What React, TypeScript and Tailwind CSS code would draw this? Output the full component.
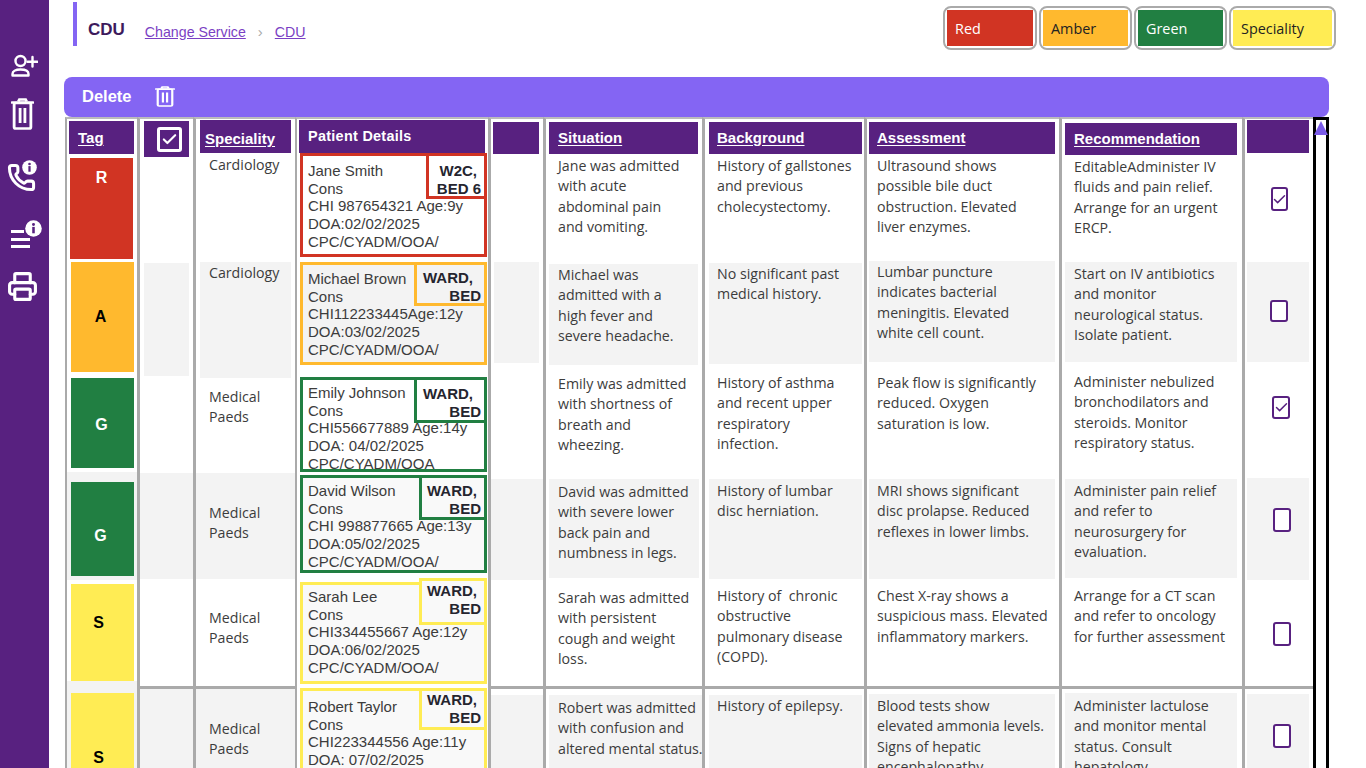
import React from "react";
import { Phone, Printer, Check } from "lucide-react";

const Lines = ({ lines }: { lines: string[] }) => (
  <>
    {lines.map((l, i) => (
      <div key={i} className="whitespace-pre">{l}</div>
    ))}
  </>
);

const Cell = ({ className, lines }: { className: string; lines?: string[] }) => (
  <div className={`shrink-0 overflow-hidden text-[14.2px] leading-[20.4px] text-[#3c3c3c] font-['Open_Sans',sans-serif] ${className}`}>
    {lines && <Lines lines={lines} />}
  </div>
);

const Head = ({ className, label, plain, children }: { className: string; label?: string; plain?: boolean; children?: React.ReactNode }) => (
  <div className={`shrink-0 flex items-center bg-[#582180] text-white font-bold font-['Liberation_Sans',sans-serif] ${className}`}>
    {label && <span className={plain ? "" : "underline underline-offset-2"}>{label}</span>}
    {children}
  </div>
);

const Info = ({ className }: { className: string }) => (
  <svg viewBox="0 0 16 16" className={`absolute ${className}`}>
    <circle cx="8" cy="8" r="7.8" fill="#ffffff" />
    <circle cx="8" cy="4.2" r="1.4" fill="#582180" />
    <rect x="6.8" y="6.5" width="2.4" height="6" fill="#582180" />
  </svg>
);

const Trash = ({ className, sw }: { className: string; sw: number }) => (
  <svg viewBox="0 0 22 32" preserveAspectRatio="none" fill="none" stroke="#ffffff" strokeWidth={sw} className={className}>
    <path d="M1 4.5h20" strokeLinecap="round" />
    <path d="M7 3.5 8 1.5h6l1 2" />
    <rect x="3" y="5" width="16" height="25.5" rx="1.5" />
    <path d="M8.7 10v15M13.3 10v15" />
  </svg>
);

const UserAdd = ({ className }: { className: string }) => (
  <svg viewBox="0 0 27 23" fill="none" stroke="#ffffff" strokeWidth="2.4" className={className}>
    <circle cx="9.5" cy="7" r="5" />
    <path d="M1.500 21.500v-1.500c0-2.800 3-4.500 8-4.500s8 1.700 8 4.500v1.500z" strokeLinejoin="round" />
    <path d="M21.500 3v9.500M16.500 7.800h10" strokeLinecap="round" />
  </svg>
);

const Box = ({ className, checked }: { className: string; checked?: boolean }) => (
  <div className={`flex items-center justify-center rounded-[3px] border-[2.5px] border-[#582180] bg-white ${className}`}>
    {checked && <Check size={15} strokeWidth={2.3} className="shrink-0 text-[#582180]" />}
  </div>
);

const Card = ({
  border,
  bg,
  cardClass,
  badgeClass,
  firstClass,
  badge,
  lines,
}: {
  border: string;
  bg: string;
  cardClass: string;
  badgeClass: string;
  firstClass: string;
  badge: string[];
  lines: string[];
}) => (
  <div className={`relative shrink-0 ml-[3px] w-[187px] border-[3px] pl-[5px] text-[15px] leading-[17.7px] text-[#3c3c3c] font-['Liberation_Sans',sans-serif] ${border} ${bg} ${cardClass}`}>
    <Lines lines={lines} />
    <div className={`absolute right-[-3px] border-[3px] pr-[3px] text-right font-bold text-[#25252f] ${border} ${bg} ${badgeClass}`}>
      {badge.map((b, i) => (
        <div key={b} className={i === 0 ? firstClass : ""}>{b}</div>
      ))}
    </div>
  </div>
);

const Tag = ({ className, label }: { className: string; label: string }) => (
  <div className={`shrink-0 flex justify-center font-bold text-[16px] font-['Liberation_Sans',sans-serif] ${className}`}>{label}</div>
);

const Legend = ({ label, className }: { label: string; className: string }) => (
  <div className="rounded-lg border-2 border-[#aaaaaa] p-[2px]">
    <div className={`flex h-[36px] items-center pl-[8px] pt-[1px] text-[14.4px] font-['Open_Sans',sans-serif] ${className}`}>{label}</div>
  </div>
);

const Rule = () => <div className="h-[3px] shrink-0 bg-[#aaaaaa]" />;
const COL = "flex h-full shrink-0 flex-col overflow-hidden border-t-2 border-t-[#bbbbbb] border-l-[#aaaaaa] bg-white";

export default function App() {
  return (
    <div className="flex h-[768px] w-[1366px] overflow-hidden bg-white">
      <aside className="relative flex w-[49px] shrink-0 flex-col items-start bg-[#582180] text-white">
        <UserAdd className="ml-[11px] mt-[54px] h-[23px] w-[27px]" />
        <Trash sw={2.7} className="ml-[11px] mt-[21px] h-[32px] w-[23px]" />
        <div className="relative ml-[7px] mt-[30px] h-[32px] w-[32px]">
          <Phone size={29} strokeWidth={2.5} className="mt-[3px]" />
          <Info className="left-[15px] top-[0px] h-[15px] w-[15px]" />
        </div>
        <div className="relative ml-[11px] mt-[28px] h-[32px] w-[32px]">
          <div className="mt-[10px] flex flex-col gap-[4.5px]">
            <div className="h-[3px] w-[13px] bg-white" />
            <div className="h-[3px] w-[19px] bg-white" />
            <div className="h-[3px] w-[19px] bg-white" />
          </div>
          <Info className="left-[14px] top-[0px] h-[17px] w-[17px]" />
        </div>
        <Printer size={31} strokeWidth={2.4} className="ml-[7px] mt-[19px]" />
      </aside>

      <main className="flex h-full min-w-0 flex-1 flex-col">
        <header className="flex h-[77px] shrink-0 items-start">
          <div className="ml-[24px] mt-[2px] h-[44px] w-[4px] bg-[#8465f3]" />
          <div className="ml-[11px] mt-[19px] text-[17px] font-bold leading-[22px] text-[#3d1a5c] font-['Liberation_Sans',sans-serif]">CDU</div>
          <div className="ml-[20px] mt-[23px] flex items-center text-[14.2px] leading-[18px] text-[#7b3fc4] font-['Liberation_Sans',sans-serif]">
            <span className="underline">Change Service</span>
            <span className="mx-[12px] text-[15px] text-[#aaaaaa]">›</span>
            <span className="underline">CDU</span>
          </div>
          <div className="ml-auto mr-[30px] mt-[6px] flex gap-[2px]">
            <div className="w-[94px]"><Legend label="Red" className="bg-[#d13423] text-white" /></div>
            <div className="w-[93px]"><Legend label="Amber" className="bg-[#ffb92e] text-[#222222]" /></div>
            <div className="w-[93px]"><Legend label="Green" className="bg-[#217f42] text-white" /></div>
            <div className="w-[107px]"><Legend label="Speciality" className="bg-[#ffec54] text-[#222222]" /></div>
          </div>
        </header>

        <div className="ml-[15px] flex h-[40px] w-[1265px] shrink-0 items-center rounded-lg bg-[#8465f3] pb-[1px] pl-[18px] text-white">
          <span className="text-[16.5px] font-bold font-['Liberation_Sans',sans-serif]">Delete</span>
          <Trash sw={2.4} className="ml-[23px] h-[21px] w-[20px]" />
        </div>

        <div className="ml-[16px] flex min-h-0 flex-1 overflow-hidden">
          <div className={`${COL} w-[72px] border-l-2`}>
            <Head className="ml-[2px] mt-[2px] h-[33px] w-[65px] pl-[9px] pt-[1px] text-[15px]" label="Tag" />
            <Tag className="ml-[3px] mt-[4px] h-[101px] w-[63px] bg-[#d13423] pt-[8px] text-white" label="R" />
            <Tag className="ml-[4px] mt-[3px] h-[110px] w-[63px] items-center bg-[#ffb92e] pr-[4px] text-black" label="A" />
            <Tag className="ml-[4px] mt-[6px] h-[90px] w-[63px] items-center bg-[#217f42] pt-[4px] pr-[2px] text-white" label="G" />
            <div className="mt-[4px] h-[108px] shrink-0 bg-[#f3f3f3] pl-[4px] pt-[10px]">
              <Tag className="h-[94px] w-[63px] items-center bg-[#217f42] pt-[14px] pr-[4px] text-white" label="G" />
            </div>
            <Tag className="ml-[4px] mt-[4px] h-[97px] w-[63px] items-center bg-[#ffec54] pb-[20px] pr-[8px] text-black" label="S" />
            <div className="flex min-h-0 flex-1 flex-col bg-[#f3f3f3] pl-[4px] pt-[12px]">
              <Tag className="min-h-0 w-[63px] flex-1 bg-[#ffec54] pt-[53px] pr-[8px] text-black" label="S" />
            </div>
          </div>

          <div className={`${COL} w-[56px] border-l-[3px]`}>
            <Head className="ml-[4px] mt-[2px] h-[36px] w-[45px] justify-center pl-[5px]">
              <div className="flex h-[25px] w-[25px] items-center justify-center rounded-[3px] border-[3px] border-white">
                <Check size={17} strokeWidth={3} className="shrink-0 text-white" />
              </div>
            </Head>
            <Cell className="h-[106px]" />
            <Cell className="ml-[4px] h-[113px] w-[45px] bg-[#f3f3f3]" />
            <Cell className="h-[97px]" />
            <Cell className="h-[106px] bg-[#f3f3f3]" />
            <Cell className="h-[107px]" />
            <Rule />
            <div className="flex-1 bg-[#f3f3f3]" />
          </div>

          <div className={`${COL} w-[102px] border-l-[3px]`}>
            <Head className="ml-[4px] mt-[1px] h-[33px] w-[91px] pl-[5px] pt-[5px] text-[15px]" label="Speciality" />
            <Cell className="h-[109px] pl-[13px] pt-[2px]" lines={["Cardiology"]} />
            <Cell className="ml-[4px] h-[116px] w-[91px] bg-[#f3f3f3] pl-[9px] pt-[1px]" lines={["Cardiology"]} />
            <Cell className="h-[95px] pl-[13px] pt-[9px]" lines={["Medical", "Paeds"]} />
            <Cell className="h-[106px] bg-[#f3f3f3] pl-[13px] pt-[30px]" lines={["Medical", "Paeds"]} />
            <Cell className="h-[107px] pl-[13px] pt-[29px]" lines={["Medical", "Paeds"]} />
            <Rule />
            <Cell className="flex-1 bg-[#f3f3f3] pl-[13px] pt-[30px]" lines={["Medical", "Paeds"]} />
          </div>

          <div className={`${COL} w-[193px] border-l-2 border-l-[#aaaaaa]`}>
            <Head className="ml-[2px] mt-[1px] h-[33px] w-[186px] pl-[9px] text-[14.4px] tracking-[0.3px]" label="Patient Details" plain />
            <Card border="border-[#d13423]" bg="bg-white" cardClass="h-[104px] pt-[6px]" badgeClass="top-[-3px] w-[61px] h-[46px] pt-[6px]" firstClass="pr-[4px]" badge={["W2C,", "BED 6"]} lines={["Jane Smith", "Cons", "CHI 987654321 Age:9y", "DOA:02/02/2025", "CPC/CYADM/OOA/"]} />
            <Card border="border-[#ffb92e]" bg="bg-[#f3f3f3]" cardClass="mt-[5px] h-[103px] pt-[5px]" badgeClass="top-[-3px] w-[73px] h-[44px] pt-[4px]" firstClass="pr-[8px]" badge={["WARD,", "BED"]} lines={["Michael Brown", "Cons", "CHI112233445Age:12y", "DOA:03/02/2025", "CPC/CYADM/OOA/"]} />
            <Card border="border-[#217f42]" bg="bg-white" cardClass="mt-[12px] h-[95px] pt-[4px]" badgeClass="top-[-3px] w-[73px] h-[46px] pt-[5px]" firstClass="pr-[8px]" badge={["WARD,", "BED"]} lines={["Emily Johnson", "Cons", "CHI556677889 Age:14y", "DOA: 04/02/2025", "CPC/CYADM/OOA"]} />
            <Card border="border-[#217f42]" bg="bg-[#f9f9f9]" cardClass="mt-[3px] h-[98px] pt-[4px]" badgeClass="top-[-3px] w-[68px] h-[45px] pt-[4px]" firstClass="pr-[4px]" badge={["WARD,", "BED"]} lines={["David Wilson", "Cons", "CHI 998877665 Age:13y", "DOA:05/02/2025", "CPC/CYADM/OOA/"]} />
            <Card border="border-[#ffec54]" bg="bg-[#f9f9f9]" cardClass="mt-[9px] h-[102px] pt-[3px]" badgeClass="top-[-7px] w-[68px] h-[47px] pt-[1px]" firstClass="pr-[4px]" badge={["WARD,", "BED"]} lines={["Sarah Lee", "Cons", "CHI334455667 Age:12y", "DOA:06/02/2025", "CPC/CYADM/OOA/"]} />
            <Card border="border-[#ffec54]" bg="bg-[#f9f9f9]" cardClass="mt-[4px] h-[90px] pt-[7px]" badgeClass="top-[-3px] w-[68px] h-[42px] pt-[0px]" firstClass="pr-[4px]" badge={["WARD,", "BED"]} lines={["Robert Taylor", "Cons", "CHI223344556 Age:11y", "DOA: 07/02/2025"]} />
          </div>

          <div className={`${COL} w-[55px] border-l-[3px]`}>
            <Head className="ml-[2px] mt-[3px] h-[32px] w-[46px]" />
            <Cell className="h-[108px]" />
            <Cell className="ml-[3px] h-[101px] w-[45px] bg-[#f3f3f3]" />
            <Cell className="h-[116px]" />
            <Cell className="h-[101px] bg-[#f3f3f3]" />
            <Cell className="h-[106px]" />
            <Rule />
            <div className="mt-[6px] flex-1 bg-[#f3f3f3]" />
          </div>

          <div className={`${COL} w-[159px] border-l-[3px]`}>
            <Head className="mt-[3px] ml-[3px] h-[32px] w-[149px] pl-[9px] text-[15px]" label="Situation" />
            <Cell className="ml-[3px] h-[110px] pl-[9px] pt-[2px]" lines={["Jane was admitted", "with acute", "abdominal pain", "and vomiting."]} />
            <Cell className="ml-[3px] h-[101px] w-[149px] bg-[#f3f3f3] pl-[9px] pt-[1px]" lines={["Michael was", "admitted with a", "high fever and", "severe headache."]} />
            <Cell className="ml-[3px] h-[114px] pl-[9px] pt-[9px]" lines={["Emily was admitted", "with shortness of", "breath and", "wheezing."]} />
            <Cell className="ml-[3px] h-[99px] w-[150px] bg-[#f3f3f3] pl-[9px] pt-[3px]" lines={["David was admitted", "with severe lower", "back pain and", "numbness in legs."]} />
            <Cell className="ml-[3px] h-[108px] pl-[9px] pt-[10px]" lines={["Sarah was admitted", "with persistent", "cough and weight", "loss."]} />
            <Rule />
            <Cell className="ml-[3px] mt-[6px] flex-1 bg-[#f3f3f3] pl-[9px] pt-[3px]" lines={["Robert was admitted", "with confusion and", "altered mental status."]} />
          </div>

          <div className={`${COL} w-[162px] border-l-[3px]`}>
            <Head className="mt-[3px] ml-[4px] h-[32px] w-[153px] pl-[8px] text-[15px]" label="Background" />
            <Cell className="ml-[4px] h-[109px] pl-[8px] pt-[2px]" lines={["History of gallstones", "and previous", "cholecystectomy."]} />
            <Cell className="ml-[4px] h-[101px] w-[153px] bg-[#f3f3f3] pl-[8px] pt-[1px]" lines={["No significant past", "medical history."]} />
            <Cell className="ml-[4px] h-[115px] pl-[8px] pt-[9px]" lines={["History of asthma", "and recent upper", "respiratory", "infection."]} />
            <Cell className="ml-[4px] h-[100px] w-[153px] bg-[#f3f3f3] pl-[8px] pt-[2px]" lines={["History of lumbar", "disc herniation."]} />
            <Cell className="ml-[4px] h-[107px] pl-[8px] pt-[7px]" lines={["History of  chronic", "obstructive", "pulmonary disease", "(COPD)."]} />
            <Rule />
            <Cell className="ml-[4px] mt-[6px] w-[153px] flex-1 bg-[#f3f3f3] pl-[8px] pt-[1px]" lines={["History of epilepsy."]} />
          </div>

          <div className={`${COL} w-[195px] border-l-[3px]`}>
            <Head className="mt-[3px] ml-[2px] h-[32px] w-[186px] pl-[8px] text-[15px]" label="Assessment" />
            <Cell className="ml-[2px] h-[107px] pl-[8px] pt-[2px]" lines={["Ultrasound shows", "possible bile duct", "obstruction. Elevated", "liver enzymes."]} />
            <Cell className="ml-[2px] h-[101px] w-[186px] bg-[#f3f3f3] pl-[8px] pt-[1px]" lines={["Lumbar puncture", "indicates bacterial", "meningitis. Elevated", "white cell count."]} />
            <Cell className="ml-[2px] h-[117px] pl-[8px] pt-[11px]" lines={["Peak flow is significantly", "reduced. Oxygen", "saturation is low."]} />
            <Cell className="ml-[2px] h-[100px] w-[186px] bg-[#f3f3f3] pl-[8px] pt-[2px]" lines={["MRI shows significant", "disc prolapse. Reduced", "reflexes in lower limbs."]} />
            <Cell className="ml-[2px] h-[107px] pl-[8px] pt-[7px]" lines={["Chest X-ray shows a", "suspicious mass. Elevated", "inflammatory markers."]} />
            <Rule />
            <Cell className="ml-[2px] mt-[5px] w-[186px] flex-1 bg-[#f3f3f3] pl-[8px] pt-[2px]" lines={["Blood tests show", "elevated ammonia levels.", "Signs of hepatic", "encephalopathy."]} />
          </div>

          <div className={`${COL} w-[183px] border-l-[3px]`}>
            <Head className="mt-[4px] ml-[3px] h-[32px] w-[172px] pl-[9px] text-[15px]" label="Recommendation" />
            <Cell className="ml-[3px] h-[107px] pl-[9px] pt-[2px]" lines={["EditableAdminister IV", "fluids and pain relief.", "Arrange for an urgent", "ERCP."]} />
            <Cell className="ml-[3px] h-[100px] w-[172px] bg-[#f3f3f3] pl-[9px] pt-[2px]" lines={["Start on IV antibiotics", "and monitor", "neurological status.", "Isolate patient."]} />
            <Cell className="ml-[3px] h-[117px] pl-[9px] pt-[10px]" lines={["Administer nebulized", "bronchodilators and", "steroids. Monitor", "respiratory status."]} />
            <Cell className="ml-[3px] h-[99px] w-[172px] bg-[#f3f3f3] pl-[9px] pt-[2px]" lines={["Administer pain relief", "and refer to", "neurosurgery for", "evaluation."]} />
            <Cell className="ml-[3px] h-[108px] pl-[9px] pt-[8px]" lines={["Arrange for a CT scan", "and refer to oncology", "for further assessment"]} />
            <Rule />
            <Cell className="ml-[3px] mt-[4px] w-[172px] flex-1 bg-[#f3f3f3] pl-[9px] pt-[3px]" lines={["Administer lactulose", "and monitor mental", "status. Consult", "hepatology."]} />
          </div>

          <div className={`${COL} w-[71px] border-l-[3px]`}>
            <Head className="ml-[2px] mt-[1px] h-[33px] w-[62px]" />
            <div className="ml-[2px] h-[109px] shrink-0 pl-[24px] pt-[34px]"><Box className="h-[24px] w-[17px]" checked /></div>
            <div className="ml-[2px] h-[100px] w-[62px] shrink-0 bg-[#f3f3f3] pl-[23px] pt-[38px]"><Box className="h-[22px] w-[18px]" /></div>
            <div className="ml-[2px] h-[116px] shrink-0 pl-[25px] pt-[34px]"><Box className="h-[23px] w-[18px]" checked /></div>
            <div className="ml-[2px] h-[102px] w-[62px] shrink-0 bg-[#f3f3f3] pl-[26px] pt-[30px]"><Box className="h-[24px] w-[18px]" /></div>
            <div className="ml-[2px] h-[106px] shrink-0 pl-[26px] pt-[42px]"><Box className="h-[24px] w-[18px]" /></div>
            <Rule />
            <div className="ml-[2px] mt-[5px] w-[62px] flex-1 bg-[#f3f3f3] pl-[26px] pt-[30px]"><Box className="h-[24px] w-[18px]" /></div>
          </div>

          <div className="relative h-full w-[16px] shrink-0 border-x-[3px] border-t-[3px] border-black bg-white">
            <svg viewBox="0 0 14 14" className="absolute left-[-2px] top-[1px] h-[14px] w-[14px]">
              <path d="M7 0 14 14H0Z" fill="#7a5be8" />
            </svg>
          </div>
        </div>
      </main>
    </div>
  );
}
